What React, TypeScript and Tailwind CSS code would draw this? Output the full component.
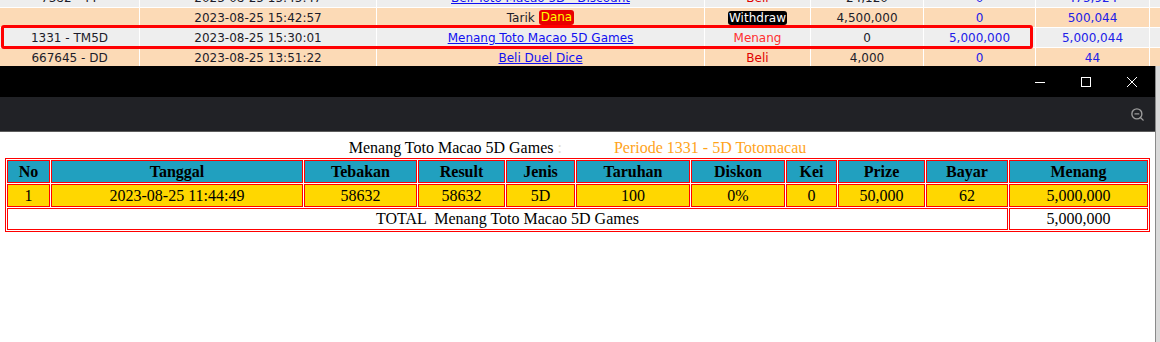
import type { FC, ReactNode } from 'react'
import { ZoomOut } from 'lucide-react'

type LedgerRow = {
  id: string
  date: string
  desc: ReactNode
  kind: ReactNode
  debit: string
  credit: string
  saldo: string
  bg: string
}

const Link: FC<{ children: ReactNode }> = ({ children }) => (
  <span className="text-[#1010f0] underline underline-offset-[1px]">{children}</span>
)

const ledger: LedgerRow[] = [
  {
    id: '7382 - TT',
    date: '2023-08-25 15:45:47',
    desc: <Link>Beli Toto Macao 5D - Discount</Link>,
    kind: <span className="text-[#e00000]">Beli</span>,
    debit: '24,120',
    credit: '0',
    saldo: '475,924',
    bg: 'bg-[#eeeeee]',
  },
  {
    id: '',
    date: '2023-08-25 15:42:57',
    desc: (
      <span className="flex items-center gap-[4px]">
        Tarik
        <span className="rounded-[3px] bg-[#e80000] px-[2px] leading-[15px] text-[#ffff00]">Dana</span>
      </span>
    ),
    kind: <span className="rounded-[3px] bg-black px-[1px] leading-[14px] text-white">Withdraw</span>,
    debit: '4,500,000',
    credit: '0',
    saldo: '500,044',
    bg: 'bg-[#fcdab6]',
  },
  {
    id: '1331 - TM5D',
    date: '2023-08-25 15:30:01',
    desc: <Link>Menang Toto Macao 5D Games</Link>,
    kind: <span className="text-[#ff3030]">Menang</span>,
    debit: '0',
    credit: '5,000,000',
    saldo: '5,000,044',
    bg: 'bg-[#eeeeee]',
  },
  {
    id: '667645 - DD',
    date: '2023-08-25 13:51:22',
    desc: <Link>Beli Duel Dice</Link>,
    kind: <span className="text-[#e00000]">Beli</span>,
    debit: '4,000',
    credit: '0',
    saldo: '44',
    bg: 'bg-[#fcdab6]',
  },
]

const LedgerBehind = () => (
  <div className="h-[66px] overflow-hidden">
    <div className="-mt-[12px] flex flex-col gap-px bg-white font-['DejaVu_Sans',sans-serif] text-[12px] text-[#1c1c2a]">
      {ledger.map((row) => (
        <div
          key={row.date}
          className="grid h-[19px] grid-cols-[139px_236px_327px_105px_112px_111px_113px_1fr] gap-x-px"
        >
          <div className={`${row.bg} flex items-center justify-center`}>{row.id}</div>
          <div className={`${row.bg} flex items-center justify-center`}>{row.date}</div>
          <div className={`${row.bg} flex items-center justify-center`}>{row.desc}</div>
          <div className={`${row.bg} flex items-center justify-center`}>{row.kind}</div>
          <div className={`${row.bg} flex items-center justify-center`}>{row.debit}</div>
          <div className={`${row.bg} flex items-center justify-center text-[#2020e8]`}>{row.credit}</div>
          <div className={`${row.bg} flex items-center justify-center text-[#2020e8]`}>{row.saldo}</div>
          <div className={row.bg} />
        </div>
      ))}
    </div>
  </div>
)

const headers = [
  ['No', 'w-[43px]'],
  ['Tanggal', 'w-[252px]'],
  ['Tebakan', 'w-[113px]'],
  ['Result', 'w-[87px]'],
  ['Jenis', 'w-[69px]'],
  ['Taruhan', 'w-[114px]'],
  ['Diskon', 'w-[94px]'],
  ['Kei', 'w-[51px]'],
  ['Prize', 'w-[87px]'],
  ['Bayar', 'w-[82px]'],
  ['Menang', 'w-[139px]'],
]

const betRow = ['1', '2023-08-25 11:44:49', '58632', '58632', '5D', '100', '0%', '0', '50,000', '62', '5,000,000']

const DetailTable = () => (
  <table className="w-[1145px] table-fixed border-separate border-spacing-px border border-[#ff0000] text-[16px] leading-[18px] text-black">
    <thead>
      <tr>
        {headers.map(([label, width]) => (
          <th key={label} className={`${width} h-[23px] border border-[#ff0000] bg-[#21a0bf] p-0 text-center font-bold`}>
            {label}
          </th>
        ))}
      </tr>
    </thead>
    <tbody>
      <tr>
        {betRow.map((value, i) => (
          // biome-ignore lint/suspicious/noArrayIndexKey: static row
          <td key={i} className="h-[23px] border border-[#ff0000] bg-[#ffd700] p-0 text-center">
            {value}
          </td>
        ))}
      </tr>
      <tr>
        <td colSpan={10} className="h-[22px] whitespace-pre border border-[#ff0000] p-0 text-center">
          TOTAL  Menang Toto Macao 5D Games
        </td>
        <td className="h-[22px] border border-[#ff0000] p-0 text-center">5,000,000</td>
      </tr>
    </tbody>
  </table>
)

const CaptionButtons = () => (
  <div className="flex h-full">
    <div className="flex w-[46px] items-center justify-center">
      <svg width="10" height="10" viewBox="0 0 10 10" className="text-white">
        <path d="M0 5.5 H10" stroke="currentColor" strokeWidth="1" />
      </svg>
    </div>
    <div className="flex w-[46px] items-center justify-center">
      <svg width="10" height="10" viewBox="0 0 10 10" className="text-white">
        <rect x="0.5" y="0.5" width="9" height="9" fill="none" stroke="currentColor" strokeWidth="1" />
      </svg>
    </div>
    <div className="flex w-[46px] items-center justify-center">
      <svg width="10" height="10" viewBox="0 0 10 10" className="text-white">
        <path d="M0 0 L10 10 M10 0 L0 10" stroke="currentColor" strokeWidth="1" />
      </svg>
    </div>
  </div>
)

const ResultWindow = () => (
  <div className="flex h-[276px]">
    <div className="flex w-[1156px] flex-col border-r border-[#8a8a8a]">
      <div className="flex h-[31px] justify-end bg-black">
        <CaptionButtons />
      </div>
      <div className="flex h-[35px] items-center justify-end border-b border-[#5c5c5c] bg-[#212226] pr-[10px]">
        <ZoomOut size={15} strokeWidth={2.2} className="text-[#9c9c9c]" />
      </div>
      <div className="flex-1 bg-white px-[5px] pt-[7px] font-['Liberation_Serif',serif]">
        <div className="mb-px h-[18px] text-center text-[16px] leading-[18px] text-black">
          Menang Toto Macao 5D Games
          <span className="text-[#e6dcc4]">&nbsp;:</span>
          <span className="ml-[52px] text-[#ffa31a]">Periode 1331 - 5D Totomacau</span>
        </div>
        <DetailTable />
      </div>
    </div>
    <div className="flex-1 bg-[#dadada]" />
  </div>
)

export default function App() {
  return (
    <div className="relative h-[342px] w-[1160px] overflow-hidden bg-white">
      <LedgerBehind />
      <ResultWindow />
      <div className="pointer-events-none absolute left-[1px] top-[25px] h-[24px] w-[1032px] rounded-[3px] border-[3px] border-[#ff0000]" />
    </div>
  )
}
